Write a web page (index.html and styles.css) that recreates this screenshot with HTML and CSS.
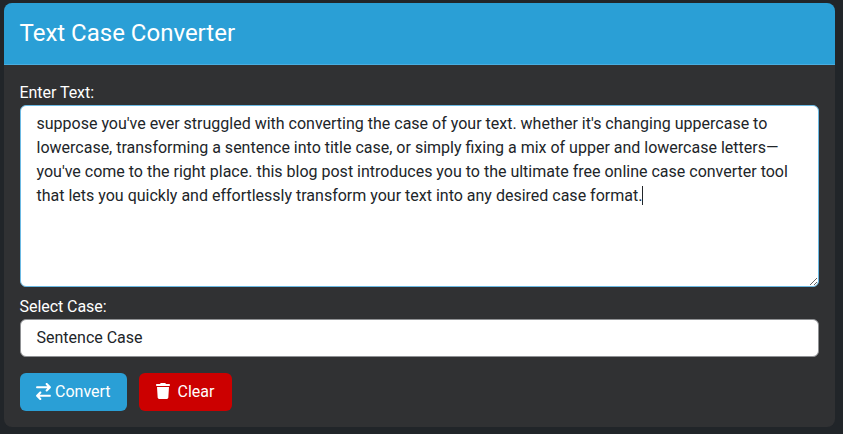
FILE: index.html
```html
<!DOCTYPE html>
<html lang="en">
<head>
<meta charset="utf-8">
<title>Text Case Converter</title>
<link rel="stylesheet" href="styles.css">
</head>
<body>
<main class="card">
  <header class="card-header"><h1>Text Case Converter</h1></header>
  <section class="card-body">
    <div class="field">
      <div class="label">Enter Text:</div>
      <div class="textarea">suppose you've ever struggled with converting the case of your text. whether it's changing uppercase to lowercase, transforming a sentence into title case, or simply fixing a mix of upper and lowercase letters—you've come to the right place. this blog post introduces you to the ultimate free online case converter tool that lets you quickly and effortlessly transform your text into any desired case format.<span class="caret"></span></div>
    </div>
    <div class="field">
      <div class="label">Select Case:</div>
      <div class="select">Sentence Case</div>
    </div>
    <div class="actions">
      <button class="btn btn-primary" type="button">
        <svg class="icon icon-exchange" viewBox="0 0 448 512" aria-hidden="true"><path d="M438.6 150.6c12.5-12.5 12.5-32.8 0-45.3l-96-96c-12.5-12.5-32.8-12.5-45.3 0s-12.5 32.8 0 45.3L338.7 96 32 96C14.3 96 0 110.3 0 128s14.3 32 32 32l306.7 0-41.4 41.4c-12.5 12.5-12.5 32.8 0 45.3s32.8 12.5 45.3 0l96-96zm-333.3 352c12.5 12.5 32.8 12.5 45.3 0s12.5-32.8 0-45.3L109.3 416 416 416c17.7 0 32-14.3 32-32s-14.3-32-32-32l-306.7 0 41.4-41.4c12.5-12.5 12.5-32.8 0-45.3s-32.8-12.5-45.3 0l-96 96c-12.5 12.5-12.5 32.8 0 45.3l96 96z"/></svg>
        <span>Convert</span>
      </button>
      <button class="btn btn-danger" type="button">
        <svg class="icon icon-trash" viewBox="0 0 448 512" aria-hidden="true"><path d="M135.2 17.7L128 32 32 32C14.3 32 0 46.3 0 64S14.3 96 32 96l384 0c17.7 0 32-14.3 32-32s-14.3-32-32-32l-96 0-7.2-14.3C307.4 6.8 296.3 0 284.2 0L163.8 0c-12.1 0-23.2 6.8-28.6 17.7zM416 128L32 128 53.2 467c1.6 25.3 22.6 45 47.9 45l245.8 0c25.3 0 46.3-19.7 47.9-45L416 128z"/></svg>
        <span>Clear</span>
      </button>
    </div>
  </section>
</main>
</body>
</html>
```

FILE: styles.css
```css
* { box-sizing: border-box; }

html, body { height: 100%; }

body {
  margin: 0;
  padding: 3px 8px 7px 4px;
  background: #212529;
  font-family: Roboto, "Liberation Sans", sans-serif;
  font-size: 16px;
  line-height: 24px;
  color: #fff;
  overflow: hidden;
}

.card {
  background: #303133;
  border-radius: 8px;
  height: 424px;
  overflow: hidden;
}

.card-header {
  background: #2a9fd6;
  height: 62px;
  padding: 0 16px 0 15.5px;
  display: flex;
  align-items: center;
  border-bottom: 1px solid #49ade0;
}

.card-header h1 {
  margin: 0;
  font-size: 24px;
  font-weight: 400;
  line-height: 29px;
}

.card-body {
  padding: 16px;
}

.field {
  margin-bottom: 8px;
}

.label {
  height: 24px;
  margin-left: -0.5px;
  letter-spacing: -0.05px;
}

.textarea {
  height: 182px;
  padding: 6px 16px 6px 15.5px;
  background: #fff;
  color: #212529;
  border: 1px solid #6bb9e3;
  border-radius: 6px;
  overflow: auto;
  resize: vertical;
}

.caret {
  display: inline-block;
  width: 1px;
  height: 19px;
  margin-bottom: -4px;
  background: #212529;
}

.select {
  height: 38px;
  padding: 6px 16px 6px 15.5px;
  background: #fff;
  color: #212529;
  border: 1px solid #8f9194;
  border-radius: 6px;
}

.actions {
  display: flex;
  gap: 12px;
  margin-top: 16px;
}

.btn {
  height: 38px;
  padding: 0 16px;
  display: inline-flex;
  align-items: center;
  border: 0;
  border-radius: 6px;
  color: #fff;
  font: inherit;
}

.btn-primary { background: #2a9fd6; }
.btn-danger {
  background: #cc0000;
  padding: 0 18px 0 17px;
}

.icon {
  display: block;
  fill: currentColor;
}

.icon-exchange {
  width: 15px;
  height: 17px;
  margin: 0 4px 1px 0;
}

.icon-trash {
  width: 14px;
  height: 16px;
  margin: 0 8px 2px 0;
}
```
